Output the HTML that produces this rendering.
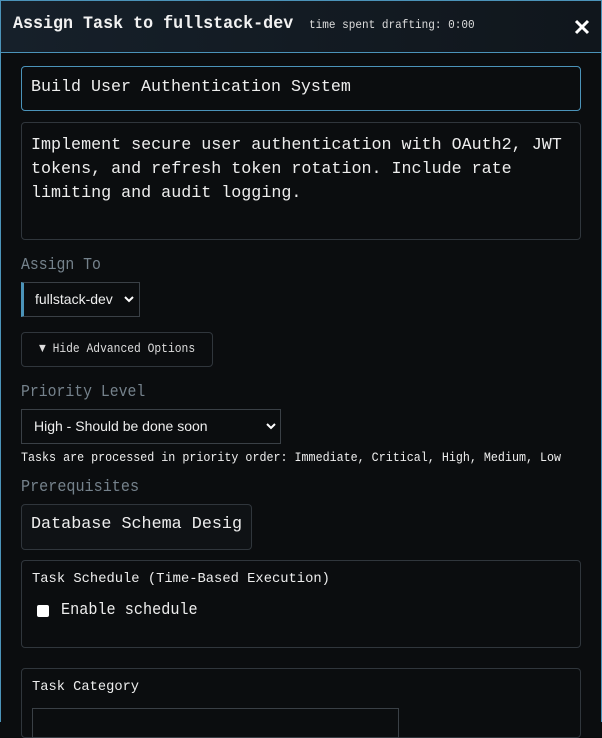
<!DOCTYPE html>
<html><head><style>
*{box-sizing:border-box;margin:0;padding:0}
body{width:602px;height:722px;overflow:hidden;background:#0b0d0f;font-family:"Liberation Mono",monospace;color:#eee;position:relative}
.frame{position:absolute;left:0;top:0;width:602px;height:722px;border:1px solid #4b93b9;border-bottom:none}
.hdr{position:absolute;left:1px;top:1px;width:600px;height:52px;background:linear-gradient(90deg,#16202a,#10161c);border-bottom:1px solid #4b93b9}
.a{position:absolute;white-space:nowrap;transform-origin:0 0}
.box{position:absolute;border:1px solid #30363c;border-radius:4px;background:#0b0d0f}
.lbl{color:#75828c;font-size:17px;transform:scaleX(.87)}
.sel{position:absolute;background:#0b0d0f;border:1px solid #3a4046;font-family:"Liberation Sans",sans-serif;font-size:14px;color:#fff}
</style></head><body>
<div class="frame"></div>
<div class="hdr"></div>
<div class="a" style="left:13px;top:15px;font-size:17.3px;font-weight:bold;color:#f2f2f2;transform:scaleX(.965)">Assign Task to fullstack-dev</div>
<div class="a" style="left:309px;top:18px;font-size:12px;color:#ddd;transform:scaleX(.92)">time spent drafting: 0:00</div>
<svg class="a" style="left:574px;top:19px" width="16" height="16" viewBox="0 0 16 16"><path d="M2 2L14 14M14 2L2 14" stroke="#fff" stroke-width="3"/></svg>

<div class="box" style="left:21px;top:66px;width:560px;height:45px;border-color:#4b93b9"></div>
<div class="a" style="left:31px;top:78px;font-size:17px;transform:scaleX(.98)">Build User Authentication System</div>

<div class="box" style="left:21px;top:122px;width:560px;height:118px"></div>
<div class="a" style="left:31px;top:134px;font-size:16.7px;line-height:24px">Implement secure user authentication with OAuth2, JWT<br>tokens, and refresh token rotation. Include rate<br>limiting and audit logging.</div>

<div class="a lbl" style="left:21px;top:256px">Assign To</div>
<div class="sel" style="left:21px;top:282px;width:119px;height:35px;border-left:3px solid #4b93b9"></div>
<div class="a" style="left:35px;top:291px;font-family:'Liberation Sans',sans-serif;font-size:14px">fullstack-dev</div>
<svg class="a" style="left:124px;top:295px" width="10" height="8" viewBox="0 0 10 8"><path d="M1 2L5 6L9 2" stroke="#fff" stroke-width="2" fill="none"/></svg>

<div class="box" style="left:21px;top:332px;width:192px;height:35px"></div>
<div class="a" style="left:39px;top:341px;font-size:13px;color:#ddd;transform:scaleX(.87)">▼ Hide Advanced Options</div>

<div class="a lbl" style="left:21px;top:383px">Priority Level</div>
<div class="sel" style="left:21px;top:409px;width:260px;height:35px"></div>
<div class="a" style="left:34px;top:418px;font-family:'Liberation Sans',sans-serif;font-size:14px">High - Should be done soon</div>
<svg class="a" style="left:266px;top:422px" width="10" height="8" viewBox="0 0 10 8"><path d="M1 2L5 6L9 2" stroke="#fff" stroke-width="2" fill="none"/></svg>
<div class="a" style="left:21px;top:451px;font-size:12.5px;color:#eee;transform:scaleX(.935)">Tasks are processed in priority order: Immediate, Critical, High, Medium, Low</div>

<div class="a lbl" style="left:21px;top:478px;transform:scaleX(.89)">Prerequisites</div>
<div class="box" style="left:21px;top:504px;width:231px;height:46px;background:#0f1215"></div>
<div class="a" style="left:31px;top:515px;font-size:17px;transform:scaleX(.985)">Database Schema Desig</div>

<div class="box" style="left:21px;top:560px;width:560px;height:88px"></div>
<div class="a" style="left:32px;top:571px;font-size:14px;transform:scaleX(.985)">Task Schedule (Time-Based Execution)</div>
<div class="a" style="left:37px;top:605px;width:12px;height:12px;background:#fff;border-radius:2px"></div>
<div class="a" style="left:61px;top:600px;font-size:16.5px;transform:scaleX(.92)">Enable schedule</div>

<div class="box" style="left:21px;top:668px;width:560px;height:70px"></div>
<div class="a" style="left:32px;top:679px;font-size:14px;transform:scaleX(.98)">Task Category</div>
<div class="box" style="left:32px;top:708px;width:367px;height:30px;border-radius:0;border-color:#3a4046"></div>
</body></html>
